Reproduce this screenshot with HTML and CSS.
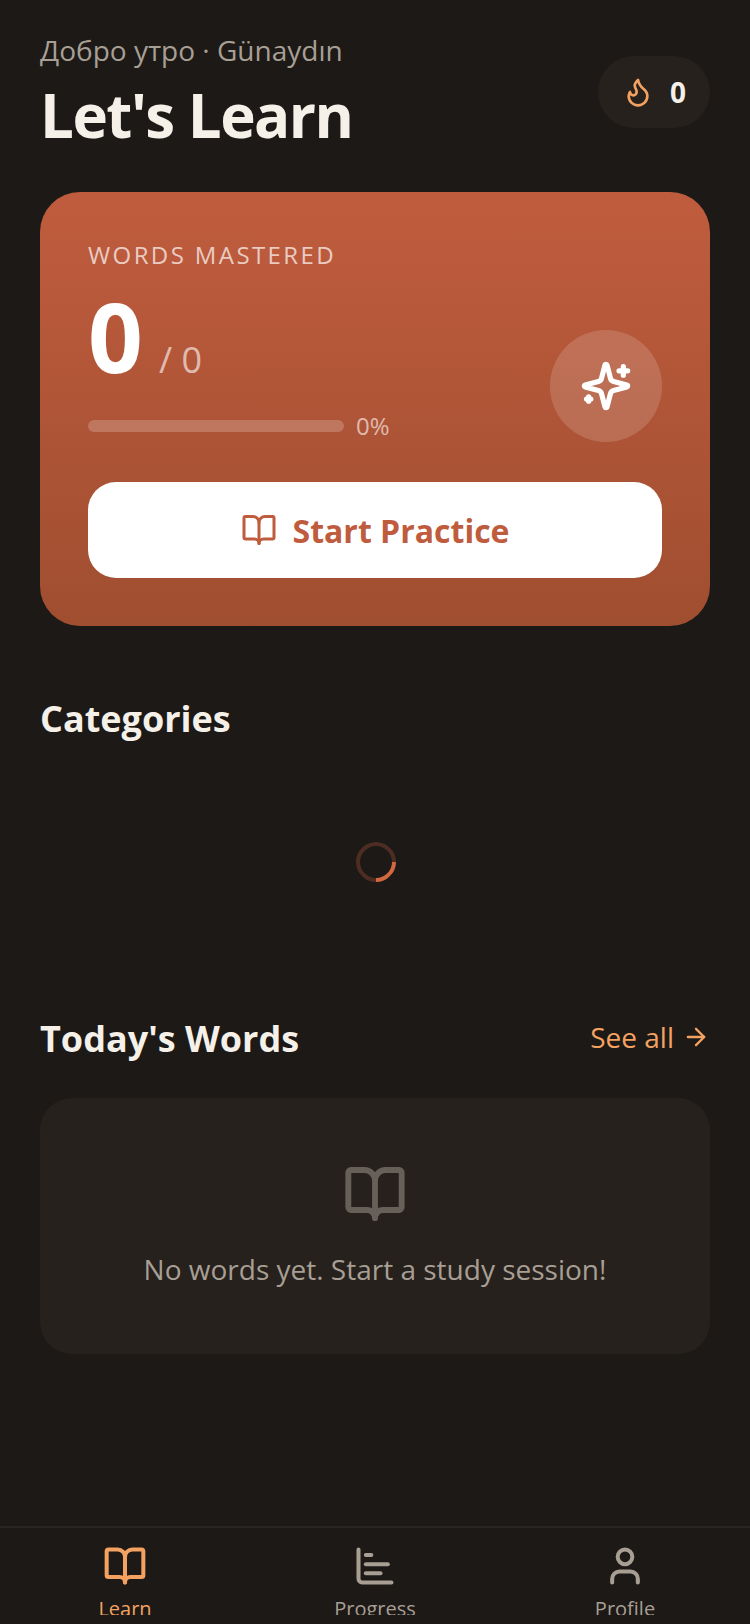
FILE: index.html
```html
<!DOCTYPE html>
<html lang="en">
<head>
    <meta charset="UTF-8">
    <meta name="viewport" content="width=device-width, initial-scale=1.0">
    <title>Let's Learn</title>
    <link rel="stylesheet" href="styles.css">
</head>
<body>
    <svg class="defs" width="0" height="0" aria-hidden="true">
        <symbol id="book" viewBox="0 0 24 24">
            <path d="M12 7v14"/>
            <path d="M3 18a1 1 0 0 1-1-1V4a1 1 0 0 1 1-1h5a4 4 0 0 1 4 4 4 4 0 0 1 4-4h5a1 1 0 0 1 1 1v13a1 1 0 0 1-1 1h-6a3 3 0 0 0-3 3 3 3 0 0 0-3-3z"/>
        </symbol>
    </svg>

    <main class="content">
        <header class="top">
            <div>
                <p class="greeting">Добро утро · Günaydın</p>
                <h1 class="title">Let's Learn</h1>
            </div>
            <div class="streak">
                <svg class="icon streak-icon" viewBox="0 0 24 24"><path d="M8.5 14.5A2.5 2.5 0 0 0 11 12c0-1.38-.5-2-1-3-1.072-2.143-.224-4.054 2-6 .5 2.5 2 4.9 4 6.5 2 1.6 3 3.5 3 5.5a7 7 0 1 1-14 0c0-1.153.433-2.294 1-3a2.5 2.5 0 0 0 2.5 2.5z"/></svg>
                <span class="streak-count">0</span>
            </div>
        </header>

        <section class="hero">
            <p class="hero-label">WORDS MASTERED</p>
            <div class="hero-row">
                <div class="hero-stats">
                    <div class="score"><span class="score-num">0</span><span class="score-total">/ 0</span></div>
                    <div class="progress">
                        <div class="progress-track"></div>
                        <span class="progress-text">0%</span>
                    </div>
                </div>
                <div class="hero-badge">
                    <svg class="icon sparkle" viewBox="0 0 24 24">
                        <path d="M9.937 15.5A2 2 0 0 0 8.5 14.063l-6.135-1.582a.5.5 0 0 1 0-.962L8.5 9.936A2 2 0 0 0 9.937 8.5l1.582-6.135a.5.5 0 0 1 .963 0L14.063 8.5A2 2 0 0 0 15.5 9.937l6.135 1.581a.5.5 0 0 1 0 .964L15.5 14.063a2 2 0 0 0-1.437 1.437l-1.582 6.135a.5.5 0 0 1-.963 0z"/>
                        <path d="M20 3v4"/><path d="M22 5h-4"/><path d="M4 17v2"/><path d="M5 18H3"/>
                    </svg>
                </div>
            </div>
            <button class="start-btn">
                <svg class="icon start-icon"><use href="#book"/></svg>
                <span>Start Practice</span>
            </button>
        </section>

        <h2 class="section-title categories-title">Categories</h2>
        <div class="loader"><div class="spinner"></div></div>

        <div class="section-head">
            <h2 class="section-title">Today's Words</h2>
            <a class="see-all">See all
                <svg class="icon arrow" viewBox="0 0 24 24"><path d="M5 12h14"/><path d="m12 5 7 7-7 7"/></svg>
            </a>
        </div>

        <div class="empty">
            <svg class="icon empty-icon"><use href="#book"/></svg>
            <p class="empty-text">No words yet. Start a study session!</p>
        </div>
    </main>

    <nav class="tabs">
        <div class="tab tab-active">
            <svg class="icon tab-icon"><use href="#book"/></svg>
            <span class="tab-label">Learn</span>
        </div>
        <div class="tab">
            <svg class="icon tab-icon" viewBox="0 0 24 24"><path d="M3 3v16a2 2 0 0 0 2 2h16"/><path d="M7 16h8"/><path d="M7 11h12"/><path d="M7 6h3"/></svg>
            <span class="tab-label">Progress</span>
        </div>
        <div class="tab">
            <svg class="icon tab-icon" viewBox="0 0 24 24"><path d="M19 21v-2a4 4 0 0 0-4-4H9a4 4 0 0 0-4 4v2"/><circle cx="12" cy="7" r="4"/></svg>
            <span class="tab-label">Profile</span>
        </div>
    </nav>
</body>
</html>
```

FILE: styles.css
```css
* {
    box-sizing: border-box;
}
body {
    margin: 0;
    height: 1624px;
    overflow: hidden;
    display: flex;
    flex-direction: column;
    background-color: #1c1917;
    font-family: "Open Sans", sans-serif;
    color: #f5f0e8;
}
p, h1, h2 {
    margin: 0;
}
.defs {
    position: absolute;
}
.icon {
    fill: none;
    stroke: currentColor;
    stroke-width: 2;
    stroke-linecap: round;
    stroke-linejoin: round;
    flex-shrink: 0;
}
.content {
    flex: 1;
    padding: 24px 40px 0;
}

/* header */
.top {
    display: flex;
    justify-content: space-between;
    align-items: center;
    height: 136px;
}
.greeting {
    font-size: 28px;
    line-height: 40px;
    color: #a89f94;
}
.title {
    font-size: 60px;
    line-height: 72px;
    font-weight: 700;
    letter-spacing: -1.5px;
    margin-top: 9px;
    margin-bottom: 3px;
}
.streak {
    display: flex;
    align-items: center;
    gap: 16px;
    height: 72px;
    padding: 0 24px;
    border-radius: 36px;
    background-color: #26211d;
}
.streak-icon {
    width: 32px;
    height: 32px;
    color: #f4a261;
}
.streak-count {
    font-size: 28px;
    font-weight: 700;
}

/* hero card */
.hero {
    margin-top: 32px;
    padding: 47px 48px 48px;
    height: 434px;
    border-radius: 40px;
    background: linear-gradient(180deg, #c05c3e 0%, #a04e30 100%);
}
.hero-label {
    font-size: 24px;
    line-height: 32px;
    letter-spacing: 2.4px;
    color: rgba(255, 255, 255, 0.7);
}
.hero-row {
    display: flex;
    justify-content: space-between;
    align-items: flex-end;
}
.hero-stats {
    width: 320px;
}
.score {
    display: flex;
    align-items: baseline;
    gap: 16px;
    margin-top: 7px;
}
.score-num {
    font-size: 96px;
    line-height: 116px;
    font-weight: 700;
    color: #fff;
}
.score-total {
    font-size: 36px;
    color: rgba(255, 255, 255, 0.6);
}
.progress {
    display: flex;
    align-items: center;
    gap: 12px;
    margin-top: 16px;
}
.progress-track {
    width: 256px;
    height: 12px;
    border-radius: 6px;
    background-color: rgba(255, 255, 255, 0.2);
}
.progress-text {
    font-size: 24px;
    line-height: 32px;
    color: rgba(255, 255, 255, 0.6);
}
.hero-badge {
    display: flex;
    align-items: center;
    justify-content: center;
    width: 112px;
    height: 112px;
    border-radius: 50%;
    background-color: rgba(255, 255, 255, 0.15);
}
.sparkle {
    width: 52px;
    height: 52px;
    color: #fff;
    stroke-width: 2.4;
}
.start-btn {
    display: flex;
    align-items: center;
    justify-content: center;
    gap: 16px;
    width: 100%;
    height: 96px;
    margin-top: 40px;
    border: 0;
    border-radius: 28px;
    background-color: #fff;
    color: #c05c3e;
    font-family: inherit;
    font-size: 32px;
    font-weight: 700;
}
.start-icon {
    width: 36px;
    height: 36px;
}

/* sections */
.section-title {
    font-size: 36px;
    line-height: 48px;
    font-weight: 700;
}
.categories-title {
    margin-top: 69px;
}
.loader {
    display: flex;
    justify-content: center;
    align-items: center;
    height: 240px;
}
.spinner {
    width: 40px;
    height: 40px;
    margin: -2px 0 0 2px;
    border-radius: 50%;
    border: 4px solid rgba(192, 92, 62, 0.3);
    border-right-color: #d2683f;
    transform: rotate(45deg);
}
.section-head {
    display: flex;
    justify-content: space-between;
    align-items: center;
    margin-top: 32px;
}
.see-all {
    display: flex;
    align-items: center;
    gap: 8px;
    padding-bottom: 4px;
    font-size: 28px;
    color: #f4a261;
}
.arrow {
    width: 28px;
    height: 28px;
}
.empty {
    display: flex;
    flex-direction: column;
    align-items: center;
    height: 256px;
    margin-top: 35px;
    padding-top: 64px;
    border-radius: 32px;
    background-color: #26211d;
}
.empty-icon {
    width: 64px;
    height: 64px;
    color: #a89f94;
    opacity: 0.5;
    stroke-width: 2.2;
}
.empty-text {
    margin-top: 23px;
    font-size: 28px;
    line-height: 40px;
    color: #a89f94;
}

/* bottom tabs */
.tabs {
    display: flex;
    height: 98px;
    border-top: 2px solid #292524;
    background-color: #1c1917;
}
.tab {
    flex: 1;
    display: flex;
    flex-direction: column;
    align-items: center;
    height: 87px;
    padding-top: 16px;
    overflow: hidden;
    color: #a89f94;
}
.tab-active {
    color: #f4a261;
}
.tab-icon {
    width: 44px;
    height: 44px;
    flex-shrink: 0;
    stroke-width: 2.2;
}
.tab-label {
    font-size: 20px;
    line-height: 30px;
    margin-top: 6px;
    flex-shrink: 0;
}
```
